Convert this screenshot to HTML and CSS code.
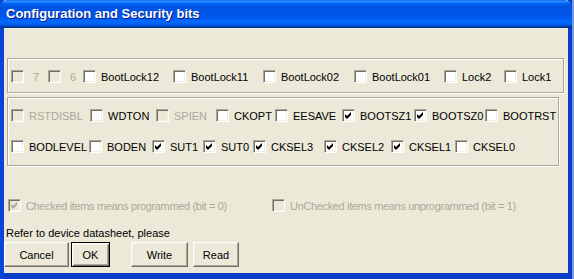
FILE: index.html
```html
<!DOCTYPE html>
<html lang="en">
<head>
    <meta charset="UTF-8">
    <title>Configuration and Security bits</title>
    <link rel="stylesheet" href="styles.css">
</head>
<body>
    <div class="window">
        <div class="titlebar">
            <span class="title">Configuration and Security bits</span>
        </div>
        <div class="client">
            <div class="group group-lock">
                <div class="row row-lock">
                    <label class="bit disabled num"><span class="box"></span><span class="txt">7</span></label>
                    <label class="bit disabled num"><span class="box"></span><span class="txt">6</span></label>
                    <label class="bit"><span class="box"></span><span class="txt">BootLock12</span></label>
                    <label class="bit"><span class="box"></span><span class="txt">BootLock11</span></label>
                    <label class="bit"><span class="box"></span><span class="txt">BootLock02</span></label>
                    <label class="bit"><span class="box"></span><span class="txt">BootLock01</span></label>
                    <label class="bit"><span class="box"></span><span class="txt">Lock2</span></label>
                    <label class="bit"><span class="box"></span><span class="txt">Lock1</span></label>
                </div>
            </div>

            <div class="group group-fuse">
                <div class="row row-fuse1">
                    <label class="bit disabled"><span class="box"></span><span class="txt">RSTDISBL</span></label>
                    <label class="bit"><span class="box"></span><span class="txt">WDTON</span></label>
                    <label class="bit disabled"><span class="box"></span><span class="txt">SPIEN</span></label>
                    <label class="bit"><span class="box"></span><span class="txt">CKOPT</span></label>
                    <label class="bit"><span class="box"></span><span class="txt">EESAVE</span></label>
                    <label class="bit checked"><span class="box"><svg viewBox="0 0 11 11"><polygon points="2,4 4,6 8,2 8,5 4,9 2,7"/></svg></span><span class="txt">BOOTSZ1</span></label>
                    <label class="bit checked"><span class="box"><svg viewBox="0 0 11 11"><polygon points="2,4 4,6 8,2 8,5 4,9 2,7"/></svg></span><span class="txt">BOOTSZ0</span></label>
                    <label class="bit"><span class="box"></span><span class="txt">BOOTRST</span></label>
                </div>
                <div class="row row-fuse2">
                    <label class="bit"><span class="box"></span><span class="txt">BODLEVEL</span></label>
                    <label class="bit"><span class="box"></span><span class="txt">BODEN</span></label>
                    <label class="bit checked"><span class="box"><svg viewBox="0 0 11 11"><polygon points="2,4 4,6 8,2 8,5 4,9 2,7"/></svg></span><span class="txt">SUT1</span></label>
                    <label class="bit checked"><span class="box"><svg viewBox="0 0 11 11"><polygon points="2,4 4,6 8,2 8,5 4,9 2,7"/></svg></span><span class="txt">SUT0</span></label>
                    <label class="bit checked"><span class="box"><svg viewBox="0 0 11 11"><polygon points="2,4 4,6 8,2 8,5 4,9 2,7"/></svg></span><span class="txt">CKSEL3</span></label>
                    <label class="bit checked"><span class="box"><svg viewBox="0 0 11 11"><polygon points="2,4 4,6 8,2 8,5 4,9 2,7"/></svg></span><span class="txt">CKSEL2</span></label>
                    <label class="bit checked"><span class="box"><svg viewBox="0 0 11 11"><polygon points="2,4 4,6 8,2 8,5 4,9 2,7"/></svg></span><span class="txt">CKSEL1</span></label>
                    <label class="bit"><span class="box"></span><span class="txt">CKSEL0</span></label>
                </div>
            </div>

            <div class="hints">
                <label class="bit disabled checked"><span class="box"><svg viewBox="0 0 11 11"><polygon points="2,4 4,6 8,2 8,5 4,9 2,7"/></svg></span><span class="txt">Checked items means programmed (bit = 0)</span></label>
                <label class="bit disabled"><span class="box"></span><span class="txt">UnChecked items means unprogrammed (bit = 1)</span></label>
            </div>

            <p class="note">Refer to device datasheet, please</p>

            <div class="buttons">
                <button class="btn btn-cancel">Cancel</button>
                <button class="btn btn-ok default">OK</button>
                <button class="btn btn-write">Write</button>
                <button class="btn btn-read">Read</button>
            </div>
        </div>
    </div>
</body>
</html>
```

FILE: styles.css
```css
body {
    margin: 0;
    padding: 0;
    background-color: #7d99d8;
    font-family: "Liberation Sans", Arial, sans-serif;
    font-size: 11px;
    color: #000;
}

.window {
    width: 564px;
    height: 279px;
    border-left: 4px solid #0a46d6;
    border-right: 4px solid #0a3ec6;
    background-color: #ece9d8;
}

.titlebar {
    height: 28px;
    margin: 0 -4px;
    padding-left: 6px;
    border-radius: 7px 7px 0 0;
    background: linear-gradient(to bottom, #0058ee 0%, #3593ff 4%, #288eff 6%, #127dff 8%, #036ffc 10%, #0262ee 14%, #0057e5 20%, #0054e3 24%, #0055eb 56%, #005bf5 66%, #026afe 76%, #0062ef 86%, #0052d6 92%, #0040ab 94%, #003092 100%);
    display: flex;
    align-items: center;
}

.title {
    color: #fff;
    font-weight: bold;
    font-size: 13px;
    text-shadow: 1px 1px #0a1883;
    margin-top: -1px;
}

.client {
    height: 251px;
    padding-top: 30px;
    box-sizing: border-box;
    border-bottom: 6px solid #0a3ec6;
}

/* etched group frames */
.group {
    border: 1px solid #aca899;
    box-shadow: inset 1px 1px #fff, 1px 1px #fff;
    margin-left: 3px;
}

.group-lock {
    margin-right: 4px;
    padding: 11px 0 9px 3px;
}

.group-fuse {
    margin-top: 4px;
    margin-right: 9px;
    padding: 11px 0 12px 3px;
}

.row {
    display: grid;
    align-items: center;
    height: 13px;
}

.row-lock {
    grid-template-columns: 37px 35px 90px 90px 91px 90px 60px auto;
}

.row-fuse1 {
    grid-template-columns: 79px 66px 60px 59px 67px 72px 71px auto;
}

.row-fuse2 {
    margin-top: 18px;
    grid-template-columns: 78px 63px 51px 50px 71px 67px 64px auto;
}

/* classic checkboxes */
.bit {
    display: flex;
    align-items: center;
    white-space: nowrap;
}

.box {
    width: 11px;
    height: 11px;
    border: 1px solid;
    border-color: #aca899 #fff #fff #aca899;
    box-shadow: inset 1px 1px #716f64, inset -1px -1px #f1efe2;
    background-color: #fff;
    margin-right: 5px;
    flex: none;
    display: flex;
}

.box svg {
    width: 11px;
    height: 11px;
    fill: #000;
}

.bit.num .txt {
    padding-left: 4px;
}

.bit.disabled .box {
    background-color: #ece9d8;
}

.bit.disabled .box svg {
    fill: #aca899;
}

.bit.disabled .txt {
    color: #aca899;
}

.hints {
    margin-top: 33px;
    padding-left: 4px;
    display: grid;
    grid-template-columns: 264px auto;
    height: 13px;
    align-items: center;
}

.hints .txt {
    letter-spacing: -0.35px;
}

.note {
    margin: 15px 0 0 2px;
    line-height: 13px;
}

.buttons {
    display: flex;
    margin-top: 2px;
}

.btn {
    height: 25px;
    font-family: "Liberation Sans", Arial, sans-serif;
    font-size: 11px;
    color: #000;
    background-color: #ece9d8;
    border: 1px solid;
    border-color: #fff #716f64 #716f64 #fff;
    box-shadow: inset -1px -1px #aca899, inset 1px 1px #f1efe2;
    padding: 0;
}

.btn.default {
    border-color: #000;
    box-shadow: inset 1px 1px #fff, inset -1px -1px #716f64, inset 2px 2px #f1efe2, inset -2px -2px #aca899;
}

.btn-cancel {
    width: 65px;
}

.btn-ok {
    width: 39px;
    margin-left: 2px;
}

.btn-write {
    width: 57px;
    margin-left: 21px;
}

.btn-read {
    width: 46px;
    margin-left: 5px;
}
```
